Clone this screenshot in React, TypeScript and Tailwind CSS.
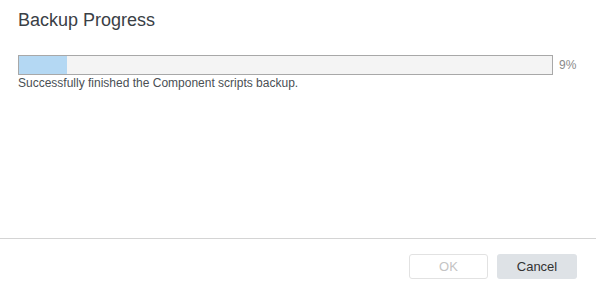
import React from "react";

export default function App() {
  const pct = 9;
  return (
    <div
      className="w-[596px] h-[289px] bg-white flex flex-col text-[#333]"
      style={{ fontFamily: '"Liberation Sans", Arial, sans-serif' }}
    >
      <div className="flex-1 px-[18px] pt-[8px]">
        <h1 className="text-[18px] leading-[24px] text-[#3a4046]">Backup Progress</h1>
        <div className="mt-[23px] flex items-center">
          <div className="w-[535px] h-[20px] border border-[#a8a8a8] bg-[#f4f4f4]">
            <div className="h-full bg-[#b4d8f3]" style={{ width: `${pct}%` }} />
          </div>
          <span className="ml-[6px] text-[12px] text-[#8a8a8a]">{pct}%</span>
        </div>
        <p className="mt-[1px] text-[12px] leading-[14px] text-[#4a4f54]">
          Successfully finished the Component scripts backup.
        </p>
      </div>
      <div className="h-[51px] border-t border-[#d4d4d4] flex justify-end items-start pt-[15px] pr-[19px] gap-[9px]">
        <button className="w-[79px] h-[25px] rounded-[3px] border border-[#e2e2e2] bg-white text-[13px] text-[#c4c4c4]">
          OK
        </button>
        <button className="w-[80px] h-[25px] rounded-[3px] bg-[#dee2e6] text-[13px] text-[#333]">
          Cancel
        </button>
      </div>
    </div>
  );
}
